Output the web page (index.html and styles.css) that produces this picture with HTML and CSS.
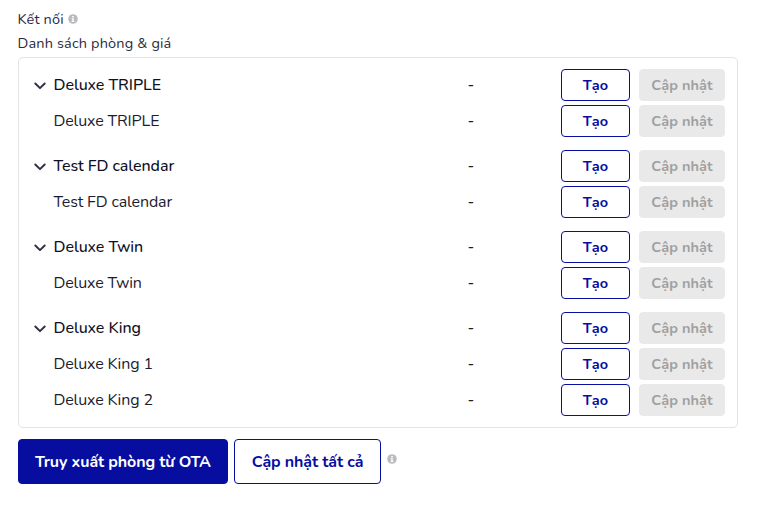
FILE: index.html
```html
<!DOCTYPE html>
<html lang="vi">
  <head>
    <meta charset="UTF-8" />
    <title>Kết nối phòng</title>
    <link rel="stylesheet" href="styles.css">
  </head>
  <body>
    <svg width="0" height="0" class="sprite">
      <symbol id="chevron" viewBox="0 0 12 8">
        <path d="M1.3 1.5 L6 6.2 L10.7 1.5" fill="none" stroke="currentColor" stroke-width="1.9" stroke-linecap="round" stroke-linejoin="round" />
      </symbol>
      <symbol id="info" viewBox="0 0 10 10">
        <circle cx="5" cy="5" r="4.8" fill="currentColor" />
        <path d="M4.2 2h1.6v1.5H4.2zM3.7 4.3h2v2.6h.7v1H3.6v-1h.7V5.3h-.6z" fill="#fff" />
      </symbol>
    </svg>

    <div class="container">
      <div class="label">Kết nối <svg class="info"><use href="#info" /></svg></div>
      <div class="label label-list">Danh sách phòng &amp; giá</div>

      <div class="room-list">
        <div class="group">
          <div class="row room">
            <svg class="chevron"><use href="#chevron" /></svg>
            <span class="name">Deluxe TRIPLE</span>
            <span class="dash">-</span>
            <button class="btn">Tạo</button>
            <button class="btn" disabled>Cập nhật</button>
          </div>
          <div class="row">
            <span class="name">Deluxe TRIPLE</span>
            <span class="dash">-</span>
            <button class="btn">Tạo</button>
            <button class="btn" disabled>Cập nhật</button>
          </div>
        </div>

        <div class="group">
          <div class="row room">
            <svg class="chevron"><use href="#chevron" /></svg>
            <span class="name">Test FD calendar</span>
            <span class="dash">-</span>
            <button class="btn">Tạo</button>
            <button class="btn" disabled>Cập nhật</button>
          </div>
          <div class="row">
            <span class="name">Test FD calendar</span>
            <span class="dash">-</span>
            <button class="btn">Tạo</button>
            <button class="btn" disabled>Cập nhật</button>
          </div>
        </div>

        <div class="group">
          <div class="row room">
            <svg class="chevron"><use href="#chevron" /></svg>
            <span class="name">Deluxe Twin</span>
            <span class="dash">-</span>
            <button class="btn">Tạo</button>
            <button class="btn" disabled>Cập nhật</button>
          </div>
          <div class="row">
            <span class="name">Deluxe Twin</span>
            <span class="dash">-</span>
            <button class="btn">Tạo</button>
            <button class="btn" disabled>Cập nhật</button>
          </div>
        </div>

        <div class="group">
          <div class="row room">
            <svg class="chevron"><use href="#chevron" /></svg>
            <span class="name">Deluxe King</span>
            <span class="dash">-</span>
            <button class="btn">Tạo</button>
            <button class="btn" disabled>Cập nhật</button>
          </div>
          <div class="row">
            <span class="name">Deluxe King 1</span>
            <span class="dash">-</span>
            <button class="btn">Tạo</button>
            <button class="btn" disabled>Cập nhật</button>
          </div>
          <div class="row">
            <span class="name">Deluxe King 2</span>
            <span class="dash">-</span>
            <button class="btn">Tạo</button>
            <button class="btn" disabled>Cập nhật</button>
          </div>
        </div>
      </div>

      <div class="actions">
        <button class="btn-large btn-primary">Truy xuất phòng từ OTA</button>
        <button class="btn-large">Cập nhật tất cả</button>
        <svg class="info"><use href="#info" /></svg>
      </div>
    </div>
  </body>
</html>
```

FILE: styles.css
```css
* {
  box-sizing: border-box;
}
body {
  margin: 0;
  background-color: #fff;
  color: #1c1c2e;
  font-family: Nunito, Lato, "Noto Sans", sans-serif;
  font-size: 16px;
}
.sprite {
  display: block;
}
.container {
  width: 720px;
  margin-left: 18px;
  padding-top: 7px;
}
.label {
  display: flex;
  align-items: center;
  gap: 4px;
  height: 24px;
  margin-left: -0.5px;
  font-size: 14.5px;
  letter-spacing: 0.16px;
  color: #2b2b3d;
}
.label-list {
  height: 26px;
  padding-bottom: 2px;
}
.info {
  width: 10px;
  height: 10px;
  color: #b9bbbf;
}
.room-list {
  display: flex;
  flex-direction: column;
  gap: 13px;
  padding: 11px 12px 11px 15px;
  border: 1px solid #e3e3e3;
  border-radius: 5px;
}
.group {
  display: flex;
  flex-direction: column;
  gap: 4px;
}
.row {
  display: grid;
  grid-template-columns: 19.5px 414px 93.5px 69px 86px;
  align-items: center;
  height: 32px;
}
.name {
  grid-column: 2;
  letter-spacing: -0.13px;
}
.room .name {
  color: #10101f;
  font-weight: 500;
  letter-spacing: -0.06px;
}
.chevron {
  width: 12px;
  height: 8px;
  margin-top: 1px;
  color: #2e2e42;
}
.btn {
  height: 32px;
  padding: 0;
  border: 1px solid #060d9f;
  border-radius: 4px;
  background-color: #fff;
  color: #060d9f;
  font-family: inherit;
  font-size: 14.5px;
  font-weight: 700;
  letter-spacing: 0.05px;
}
.btn:disabled {
  width: 86px;
  margin-left: 9px;
  border-color: #e9e9e9;
  background-color: #e9e9e9;
  color: #a0a0a0;
}
.actions {
  display: flex;
  gap: 6px;
  margin-top: 11px;
}
.actions .info {
  margin: 15px 0 0 -0.5px;
}
.btn-large {
  width: 147px;
  height: 45px;
  padding: 0;
  border: 1px solid #060d9f;
  border-radius: 4px;
  background-color: #fff;
  color: #060d9f;
  font-family: inherit;
  font-size: 16px;
  font-weight: 700;
  letter-spacing: -0.1px;
  white-space: nowrap;
}
.btn-primary {
  width: 210px;
  background-color: #060d9f;
  color: #fff;
}
```
